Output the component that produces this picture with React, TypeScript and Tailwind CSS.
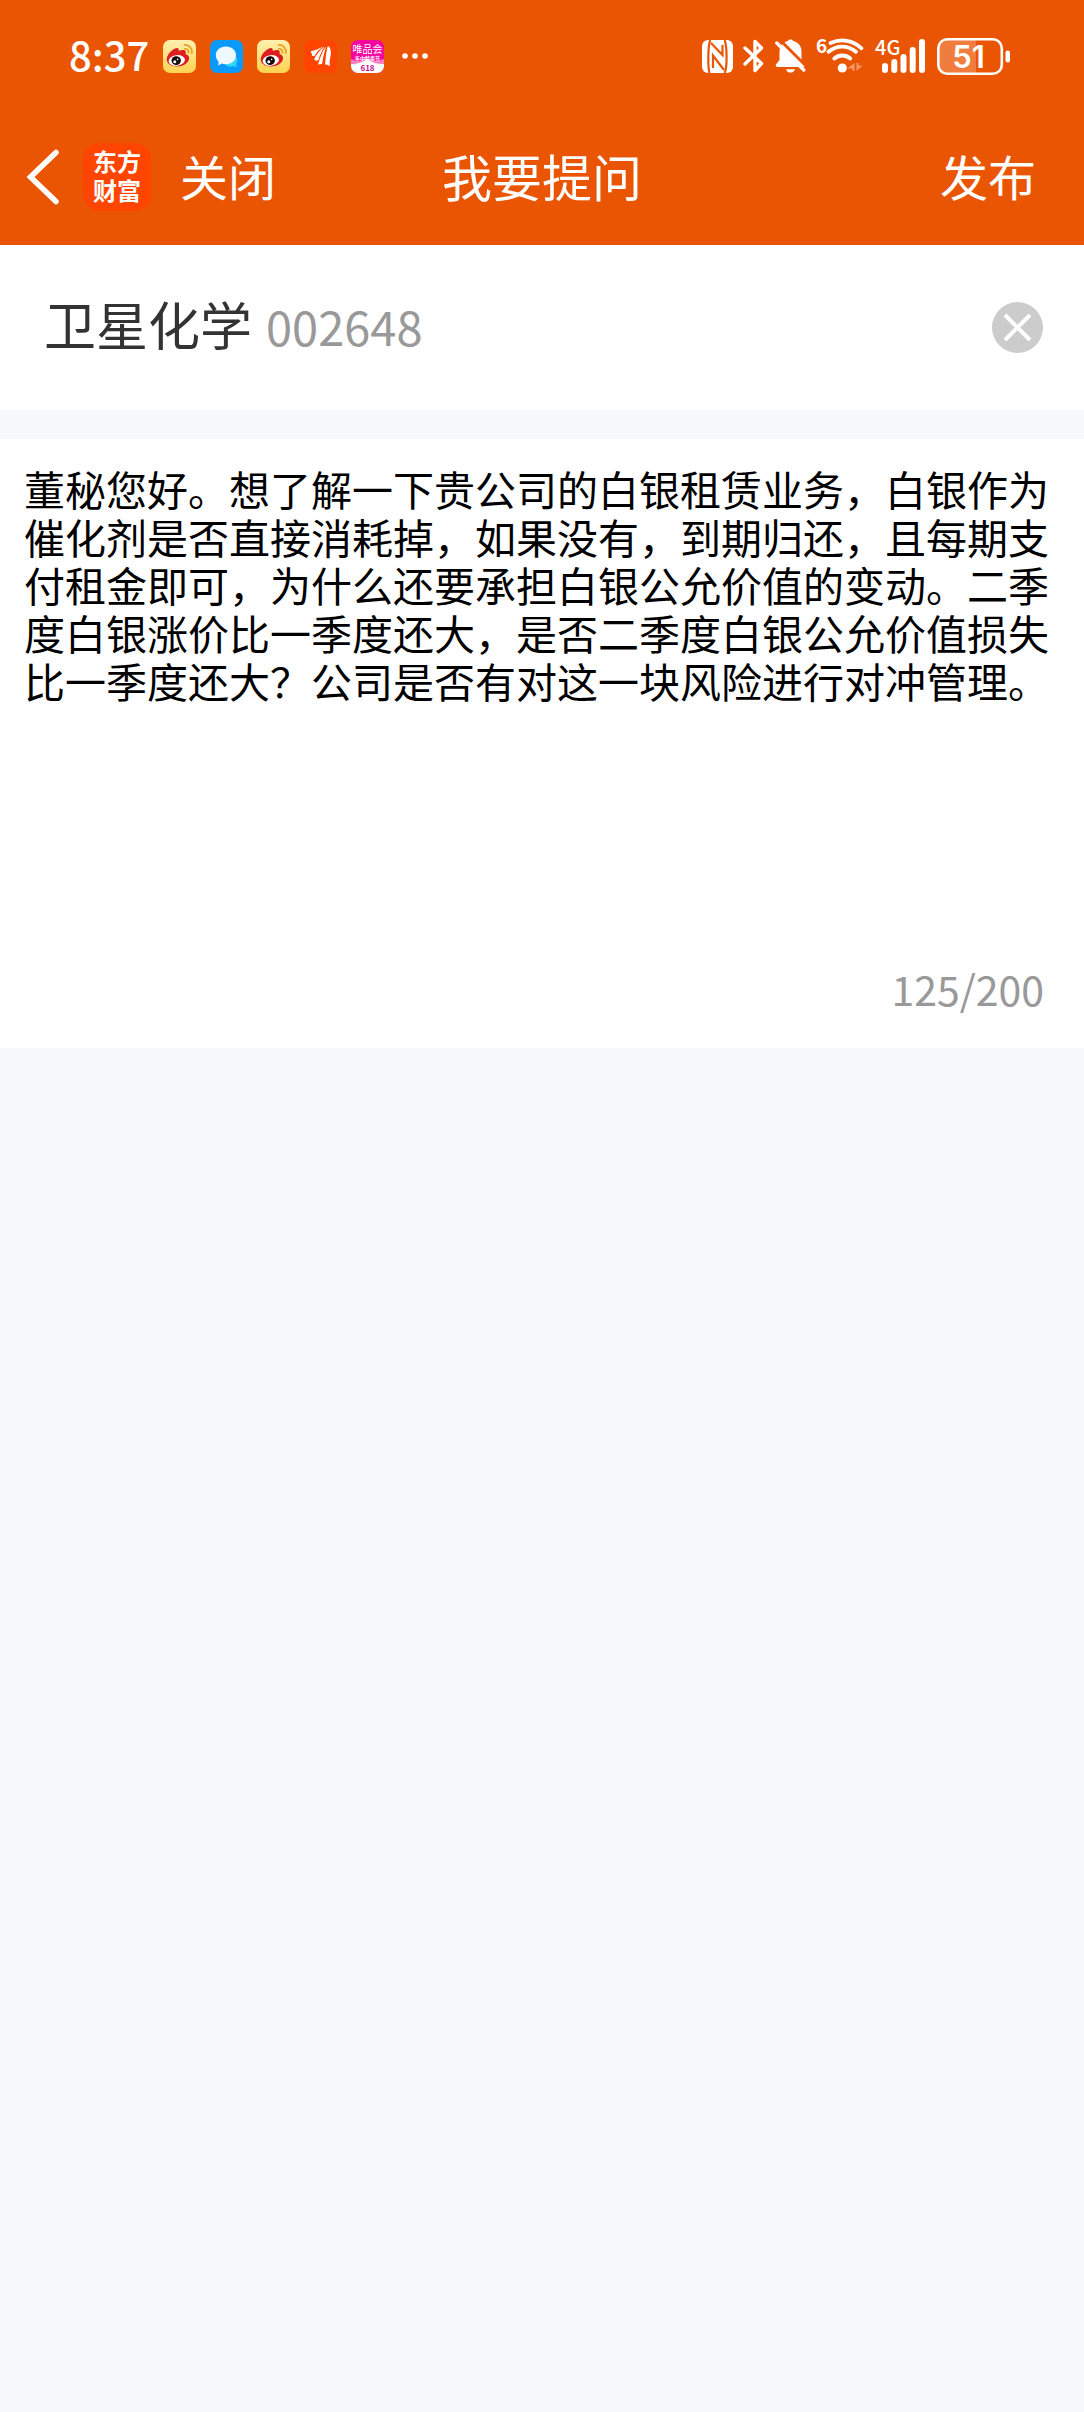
import React, { useState } from "react";

const MAX_LENGTH = 200;

const INITIAL_QUESTION =
	"董秘您好。想了解一下贵公司的白银租赁业务，白银作为催化剂是否直接消耗掉，如果没有，到期归还，且每期支付租金即可，为什么还要承担白银公允价值的变动。二季度白银涨价比一季度还大，是否二季度白银公允价值损失比一季度还大？公司是否有对这一块风险进行对冲管理。";

function WeiboIcon({ id }: { id: string }) {
	return (
		<svg className="size-[33px]" viewBox="0 0 33 33" aria-hidden="true">
			<defs>
				<linearGradient id={id} x1="0" y1="0" x2="0" y2="1">
					<stop offset="0" stopColor="#fff0b0" />
					<stop offset="1" stopColor="#ffd250" />
				</linearGradient>
			</defs>
			<rect width="33" height="33" rx="7" fill={`url(#${id})`} />
			<path
				d="M12 8.500c2.500-1.500 4.300 0 3.800 2.500 2.500-1.300 6.500-1.800 7 .8.2 1-.3 1.600-.3 2.200 2.500.8 4 2.500 3.500 5-.9 4.500-6 7.500-12 7.500-6.500 0-10.500-3.200-10.200-7.500.2-4 4.500-9 8.200-10.500z"
				fill="#dc1e1e"
			/>
			<ellipse cx="13.800" cy="20.400" rx="8.200" ry="5.300" fill="#fff" transform="rotate(-8 13.800 20.400)" />
			<ellipse cx="13.200" cy="20.600" rx="4.700" ry="4.300" fill="#140a0a" />
			<circle cx="11.800" cy="21.800" r="1.500" fill="#fff" />
			<circle cx="14.600" cy="19.400" r=".8" fill="#fff" />
			<g fill="none" stroke="#e8a32a" strokeWidth="1.800" strokeLinecap="round">
				<path d="M21.500 5c4.500-.4 8 3.200 7.300 8" />
				<path d="M21.800 8.800c2.500-.2 4 1.500 3.700 4" />
			</g>
		</svg>
	);
}

function MessageIcon() {
	return (
		<svg className="size-[33px]" viewBox="0 0 33 33" aria-hidden="true">
			<rect width="33" height="33" rx="7" fill="#0a9bfa" />
			<path
				d="M26.500 17c1.200 2.500.9 5.500-.6 7.200l1 3-3.400-.9c-3 .9-6.500.2-8.500-1.800z"
				fill="#2fd6f5"
			/>
			<path
				d="M16 6.500c5.800 0 10 3.800 10 8.800s-4.200 8.900-10 8.900c-1.600 0-3-.3-4.200-.8l-3.600 2 .4-3.800C6.900 20 5.800 17.800 5.800 15.300c0-5 4.400-8.800 10.200-8.800z"
				fill="#eef8ff"
			/>
		</svg>
	);
}

function EastMoneyIcon() {
	return (
		<svg className="size-[33px]" viewBox="0 0 33 33" aria-hidden="true">
			<rect width="33" height="33" rx="7" fill="#ff4500" />
			<g fill="#fff">
				<path d="M6.500 11.500C10.500 10.500 15 8.500 19.500 6.500 15.500 9 12.500 12 10.500 16H8c0-1.800-.5-3.200-1.500-4.500z" />
				<path d="M10 19.500C12.500 14.500 15.500 10 20.800 6.500c-3 4-5 8.500-6.300 13.500L12 21c-.3-.7-1-1.200-2-1.500z" />
				<path d="M14 24.500C16 18 18 11.500 22 6.500c-1.500 5-3 11-4 17.500-1.200.2-2.800.2-4 .5z" />
				<path d="M23.500 6.500h1.800c2 3.500 2 7.500 1 11-.8 3-.8 5.500-.3 8.500-1.500-.8-3.500-1.500-5-1.500.8-6 1-12 2.500-18z" />
			</g>
		</svg>
	);
}

function VipIcon() {
	return (
		<svg className="size-[33px] overflow-visible" viewBox="0 0 33 33" aria-hidden="true">
			<defs>
				<clipPath id="vip-clip">
					<rect width="33" height="33" rx="7" />
				</clipPath>
			</defs>
			<g clipPath="url(#vip-clip)">
				<rect width="33" height="33" fill="#f5079f" />
				<path d="M0 24c6-1 12-2 16-5.500C20 22 27 23 33 24v9H0z" fill="#fff" />
				<path d="M0 19c6 3 10 2 16-1 6 3 10 4 17 1v5c-6 0-12-1-17-5-5 4-11 5-16 5z" fill="#ff7fbe" />
			</g>
			<g textAnchor="middle" fontFamily="'Noto Sans CJK SC', sans-serif">
				<text x="16.500" y="12.500" fontSize="10" fill="#fff">唯品会</text>
				<text x="16.500" y="19.500" fontSize="5" fontWeight="700" fill="#fff">年中特卖节</text>
				<text x="16.500" y="31" fontSize="8" fontWeight="700" fill="#c0148c">618</text>
			</g>
		</svg>
	);
}

function NfcIcon() {
	return (
		<svg className="h-[33px] w-[31px]" viewBox="0 0 31 33" aria-label="NFC">
			<rect width="31" height="33" rx="6" fill="#fff" />
			<g fill="none" stroke="#ea5504" strokeWidth="2.200">
				<path d="M8.300 0C5.900 5.500 5.700 26 7.500 33" />
				<path d="M22.700 0c2.400 7 2.600 27.500 0 33" />
				<path d="M9 3 20.500 15V5" />
				<path d="M22 30 11 15.500V28" />
			</g>
		</svg>
	);
}

function BluetoothIcon() {
	return (
		<svg className="h-[36px] w-[22px]" viewBox="0 0 22 36" aria-label="蓝牙">
			<path
				d="M2 10 18.500 25.500 12 32.500V3.500L18.500 10 2 26"
				fill="none"
				stroke="#fff"
				strokeWidth="3.400"
				strokeLinecap="round"
				strokeLinejoin="round"
			/>
		</svg>
	);
}

function MutedBellIcon() {
	return (
		<svg className="h-[36px] w-[31px]" viewBox="0 0 31 36" aria-label="静音">
			<path
				d="M15.500 1.500c1.500 0 2.300.6 2.600 1.600 5.200 1.300 8.400 5 8.400 10.400v8.500l3.500 4.500c.7 1.300 0 2.500-1.500 2.500H2.500c-1.500 0-2.200-1.200-1.500-2.500L4.500 22v-8.500c0-5.400 3.200-9.100 8.400-10.400.3-1 1.100-1.600 2.600-1.600z"
				fill="#fff"
			/>
			<path d="M11 31.200h9c-.6 2-2.200 3.400-4.500 3.400S11.600 33.200 11 31.200z" fill="#fff" />
			<path d="M3.500.5 33 30" stroke="#ea5504" strokeWidth="3" />
			<path d="M0 0h13L5 4.500 4 14H0z" fill="#ea5504" />
			<path d="M1.800 5 28.800 32" stroke="#fff" strokeWidth="3.300" strokeLinecap="round" />
		</svg>
	);
}

function WifiIcon() {
	return (
		<svg className="h-[38px] w-[49px] overflow-visible" viewBox="0 0 49 38" aria-label="Wi-Fi 6">
			<text
				x="0"
				y="15.500"
				fill="#fff"
				fontSize="19"
				fontWeight="700"
				fontFamily="'Noto Sans CJK SC', sans-serif"
			>
				6
			</text>
			<g fill="none" stroke="#fff" strokeWidth="3.800" strokeLinecap="round">
				<path d="M14.500 6c11-4.800 22.500-2.800 31 5.300" />
				<path d="M12.500 14.800c8-7 19.500-7 27.500 0" />
				<path d="M18.300 21.500c4.700-4 11.300-4 16 0" />
			</g>
			<circle cx="26.300" cy="31" r="4.600" fill="#fff" />
			<g fill="#f5ac83" opacity=".8">
				<path d="M38.500 26v8h-2v-2.500h-5z" />
				<path d="M40.500 34v-8h2v2.500h4z" />
			</g>
		</svg>
	);
}

function SignalIcon() {
	return (
		<svg className="h-[36px] w-[52px] overflow-visible" viewBox="0 0 52 36" aria-label="4G">
			<text
				x="0"
				y="17"
				fill="#fff"
				fontSize="20"
				fontWeight="500"
				fontFamily="'Noto Sans CJK SC', sans-serif"
			>
				4G
			</text>
			<g fill="#fff">
				<rect x="7" y="25" width="6" height="10" rx="3" />
				<rect x="16.300" y="21" width="6" height="14" rx="3" />
				<rect x="25.500" y="16" width="6" height="19" rx="3" />
				<rect x="34.700" y="9" width="6" height="26" rx="3" />
				<rect x="44" y="1" width="6" height="34" rx="3" />
			</g>
		</svg>
	);
}

function BatteryIcon() {
	return (
		<svg className="h-[37px] w-[73px] overflow-visible" viewBox="0 0 73 37" aria-label="电量 51">
			<path d="M10 2h29v33H10a8 8 0 0 1-8-8V10a8 8 0 0 1 8-8z" fill="#f07d3e" />
			<rect x="1.300" y="1.300" width="63.500" height="34.400" rx="9" fill="none" stroke="#fff" strokeWidth="2.600" />
			<rect x="68.500" y="12.500" width="4.500" height="12" rx="2.200" fill="#fff" />
			<text
				x="31.500"
				y="29.500"
				textAnchor="middle"
				fill="#fff"
				fontSize="31"
				fontWeight="600"
				fontFamily="Inter, sans-serif"
			>
				51
			</text>
		</svg>
	);
}

function StatusBar() {
	return (
		<div className="flex h-[112px] items-center justify-between pr-[74px] pl-[69px]">
			<div className="flex items-center gap-[14px]">
				<span className="pb-1 text-[40px] leading-[48px] font-medium">8:37</span>
				<WeiboIcon id="weibo-a" />
				<MessageIcon />
				<WeiboIcon id="weibo-b" />
				<EastMoneyIcon />
				<VipIcon />
				<svg className="ml-1 h-[6px] w-[26px]" viewBox="0 0 26 6" fill="#fff" aria-hidden="true">
					<circle cx="3" cy="3" r="2.800" />
					<circle cx="13" cy="3" r="2.800" />
					<circle cx="23" cy="3" r="2.800" />
				</svg>
			</div>
			<div className="flex items-center gap-[10px]">
				<NfcIcon />
				<BluetoothIcon />
				<MutedBellIcon />
				<WifiIcon />
				<SignalIcon />
				<BatteryIcon />
			</div>
		</div>
	);
}

export default function App() {
	const [stock, setStock] = useState<{ name: string; code: string } | null>({
		name: "卫星化学",
		code: "002648",
	});
	const [question, setQuestion] = useState(INITIAL_QUESTION);
	// The counter starts at 125 for the draft text
	const count = question === INITIAL_QUESTION ? 125 : question.length;

	return (
		<div className="min-h-screen bg-[#f7f8fa] font-['Noto_Sans_CJK_SC',sans-serif]">
			{/* Header */}
			<header className="bg-[#ea5504] text-white">
				<StatusBar />
				<nav className="grid h-[133px] grid-cols-[1fr_auto_1fr] items-center px-[26px] pb-1">
					<div className="flex items-center">
						<button type="button" aria-label="返回">
							<svg className="h-[56px] w-[34px]" viewBox="0 0 34 56" aria-hidden="true">
								<path
									d="M30 3.500 4.500 28 30 52.500"
									fill="none"
									stroke="#fff"
									strokeWidth="5.500"
									strokeLinecap="round"
								/>
							</svg>
						</button>
						<a
							href="#"
							className="ml-[23px] flex size-[68px] items-center justify-center rounded-2xl bg-[#ff4500] pb-1 text-center text-[24px] leading-[29px] font-bold"
						>
							<span>
								东方
								<br />
								财富
							</span>
						</a>
						<button type="button" className="ml-[29px] pb-1 text-[48px] leading-[56px]">
							关闭
						</button>
					</div>
					<h1 className="pb-1 text-[50px] leading-[56px]">我要提问</h1>
					<button type="button" className="mr-[22px] justify-self-end pb-1 text-[48px] leading-[56px]">
						发布
					</button>
				</nav>
			</header>

			{/* Stock */}
			<section className="flex h-[165px] items-center justify-between bg-white pr-[41px] pl-11">
				{stock && (
					<>
						<div className="flex items-baseline gap-[14px] pb-[6px]">
							<span className="text-[52px] leading-[64px] text-[#333333]">{stock.name}</span>
							<span className="text-[47px] leading-[64px] text-[#999999]">{stock.code}</span>
						</div>
						<button type="button" aria-label="清除" onClick={() => setStock(null)}>
							<svg className="size-[51px]" viewBox="0 0 51 51" aria-hidden="true">
								<circle cx="25.500" cy="25.500" r="25.500" fill="#cccccc" />
								<path d="m13 13 25 25M38 13 13 38" stroke="#fff" strokeWidth="4" />
							</svg>
						</button>
					</>
				)}
			</section>

			{/* Question */}
			<section className="mt-[29px] bg-white px-6 pt-[25px] pb-8">
				<textarea
					aria-label="提问内容"
					rows={10}
					maxLength={MAX_LENGTH}
					value={question}
					onChange={(e) => setQuestion(e.target.value)}
					className="block w-full resize-none overflow-hidden bg-transparent text-[41px] leading-[48px] text-black outline-none"
				/>
				<p className="pt-4 pr-4 text-right text-[41px] leading-[56px] text-[#999999]">
					{count}/{MAX_LENGTH}
				</p>
			</section>
		</div>
	);
}
